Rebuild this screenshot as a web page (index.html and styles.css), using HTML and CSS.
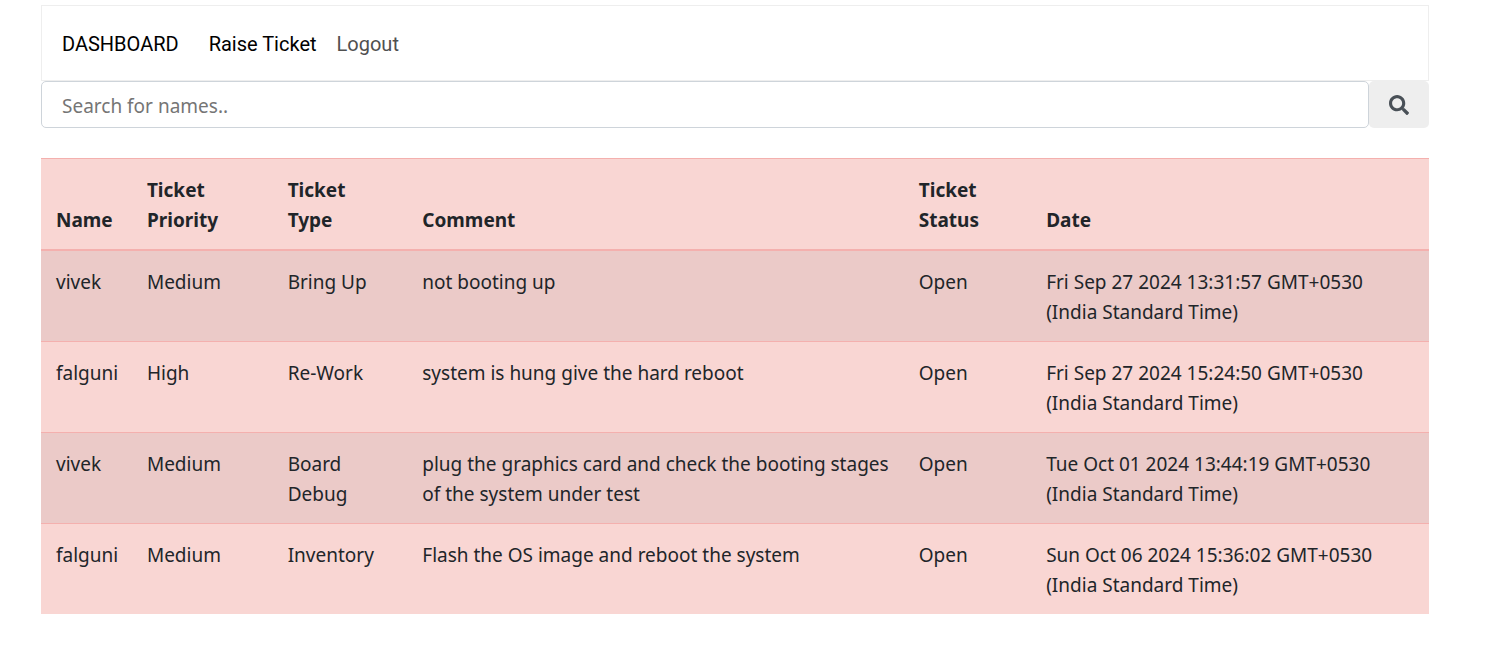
FILE: index.html
```html
<!DOCTYPE html>
<html lang="en">
<head>
<meta charset="utf-8">
<meta name="viewport" content="width=device-width, initial-scale=1">
<title>Dashboard</title>
<link rel="stylesheet" href="styles.css">
</head>
<body>
<div class="page">
  <nav class="navbar">
    <a class="brand" href="#">DASHBOARD</a>
    <a class="nav-link active" href="#">Raise Ticket</a>
    <a class="nav-link" href="#">Logout</a>
  </nav>
  <form class="search">
    <input class="search-input" type="text" placeholder="Search for names.." aria-label="Search for names">
    <button class="search-button" type="button" aria-label="Search">
      <svg class="search-icon" viewBox="0 0 512 512" aria-hidden="true"><path fill="currentColor" d="M505 442.700L405.300 343c-4.500-4.500-10.600-7-17-7H372c27.600-35.300 44-79.700 44-128C416 93.100 322.900 0 208 0S0 93.100 0 208s93.100 208 208 208c48.300 0 92.700-16.400 128-44v16.300c0 6.400 2.500 12.500 7 17l99.700 99.700c9.400 9.400 24.600 9.400 33.900 0l28.300-28.300c9.400-9.400 9.400-24.600.1-34zM208 336c-70.700 0-128-57.200-128-128 0-70.700 57.200-128 128-128 70.700 0 128 57.200 128 128 0 70.700-57.200 128-128 128z"/></svg>
    </button>
  </form>
  <table class="tickets">
    <colgroup><col class="col-name"><col class="col-priority"><col class="col-type"><col class="col-comment"><col class="col-status"><col class="col-date"></colgroup>
    <thead>
      <tr><th>Name</th><th>Ticket<br>Priority</th><th>Ticket<br>Type</th><th>Comment</th><th>Ticket<br>Status</th><th>Date</th></tr>
    </thead>
    <tbody>
      <tr><td>vivek</td><td>Medium</td><td>Bring Up</td><td>not booting up</td><td>Open</td><td>Fri Sep 27 2024 13:31:57 GMT+0530<br>(India Standard Time)</td></tr>
      <tr><td>falguni</td><td>High</td><td>Re-Work</td><td>system is hung give the hard reboot</td><td>Open</td><td>Fri Sep 27 2024 15:24:50 GMT+0530<br>(India Standard Time)</td></tr>
      <tr><td>vivek</td><td>Medium</td><td>Board<br>Debug</td><td>plug the graphics card and check the booting stages<br>of the system under test</td><td>Open</td><td>Tue Oct 01 2024 13:44:19 GMT+0530<br>(India Standard Time)</td></tr>
      <tr><td>falguni</td><td>Medium</td><td>Inventory</td><td>Flash the OS image and reboot the system</td><td>Open</td><td>Sun Oct 06 2024 15:36:02 GMT+0530<br>(India Standard Time)</td></tr>
    </tbody>
  </table>
</div>
</body>
</html>
```
FILE: styles.css
```css
*, *::before, *::after { box-sizing: border-box; }
body {
  margin: 0;
  background: #fff;
  color: #212529;
  font: 19px/30px "Noto Sans", sans-serif;
}
.page { margin: 5px 82px 0 41px; }
.navbar {
  display: flex;
  align-items: center;
  height: 76px;
  padding: 2px 20px 0;
  border: 1px solid #eee;
  font-family: Roboto, "Liberation Sans", sans-serif;
  font-size: 20px;
}
.brand, .nav-link { color: #505050; text-decoration: none; white-space: nowrap; }
.brand { margin-right: 30px; color: #000; }
.nav-link { margin-right: 20px; }
.nav-link.active { color: #000; }
.search { display: flex; margin-bottom: 30px; }
.search-input {
  flex: 1;
  min-width: 0;
  height: 47px;
  padding: 2px 20px 0;
  border: 1px solid #ced4da;
  border-radius: 5px;
  background: #fff;
  color: inherit;
  font: inherit;
}
.search-input::placeholder { color: #757575; opacity: 1; }
.search-button {
  display: flex;
  align-items: center;
  justify-content: center;
  width: 60px;
  padding: 0;
  border: 0;
  border-radius: 5px;
  background: #eee;
  color: #495057;
}
.search-icon { width: 20px; height: 20px; }
.tickets {
  width: 100%;
  table-layout: fixed;
  border-collapse: collapse;
  background: #f9d6d3;
}
.tickets th, .tickets td {
  padding: 16px 0 14px 15px;
  border-top: 1px solid #f4b0ae;
  text-align: left;
  vertical-align: top;
  white-space: nowrap;
}
.tickets th { vertical-align: bottom; border-bottom: 2px solid #f4b0ae; }
.tickets tbody tr:nth-child(odd) { background: #ebcac8; }
.col-name { width: 6.550%; }
.col-priority { width: 10.140%; }
.col-type { width: 9.700%; }
.col-comment { width: 35.770%; }
.col-status { width: 9.180%; }
```
